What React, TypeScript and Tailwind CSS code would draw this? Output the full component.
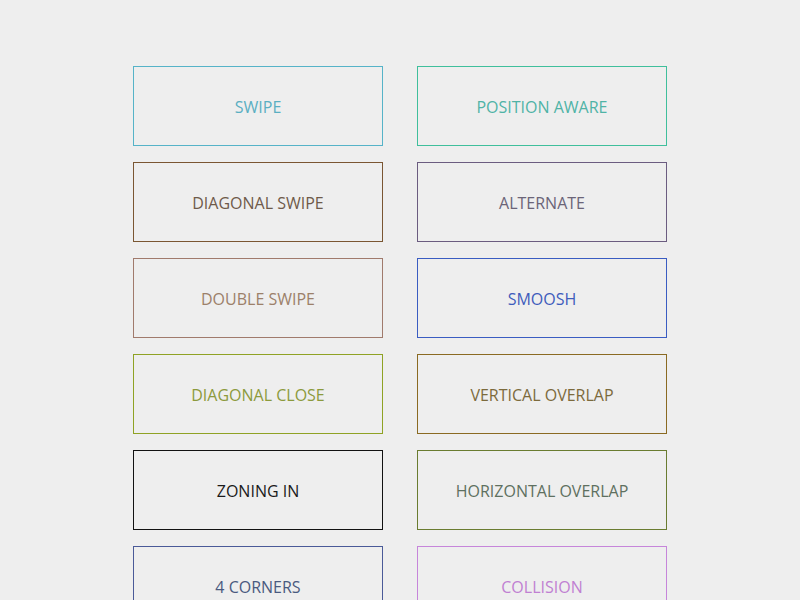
import React from "react";

const items: { label: string; cls: string }[] = [
  { label: "SWIPE", cls: "border-[#55b3c8] text-[#5aafc2]" },
  { label: "POSITION AWARE", cls: "border-[#3fbf9c] text-[#4fb3a6]" },
  { label: "DIAGONAL SWIPE", cls: "border-[#7a5632] text-[#6e5a4a]" },
  { label: "ALTERNATE", cls: "border-[#6b5c80] text-[#6b6478]" },
  { label: "DOUBLE SWIPE", cls: "border-[#a07a6c] text-[#9c806a]" },
  { label: "SMOOSH", cls: "border-[#3a5cc2] text-[#3e5cbc]" },
  { label: "DIAGONAL CLOSE", cls: "border-[#8fa224] text-[#8c9a3c]" },
  { label: "VERTICAL OVERLAP", cls: "border-[#8a6a22] text-[#7c6a3c]" },
  { label: "ZONING IN", cls: "border-[#111111] text-[#1a1a1a]" },
  { label: "HORIZONTAL OVERLAP", cls: "border-[#6a7c30] text-[#5e7060]" },
  { label: "4 CORNERS", cls: "border-[#4a5a98] text-[#4a5a80]" },
  { label: "COLLISION", cls: "border-[#c685da] text-[#c080d2]" },
];

export default function App() {
  return (
    <div className="min-h-[600px] bg-[#eeeeee] pt-[66px] font-['Open_Sans',sans-serif]">
      <div className="mx-auto grid w-[534px] grid-cols-[250px_250px] gap-x-[34px] gap-y-[16px]">
        {items.map((it) => (
          <div
            key={it.label}
            className={`flex h-[80px] items-center justify-center border ${it.cls} text-[16px] pt-[1px]`}
          >
            {it.label}
          </div>
        ))}
      </div>
    </div>
  );
}
